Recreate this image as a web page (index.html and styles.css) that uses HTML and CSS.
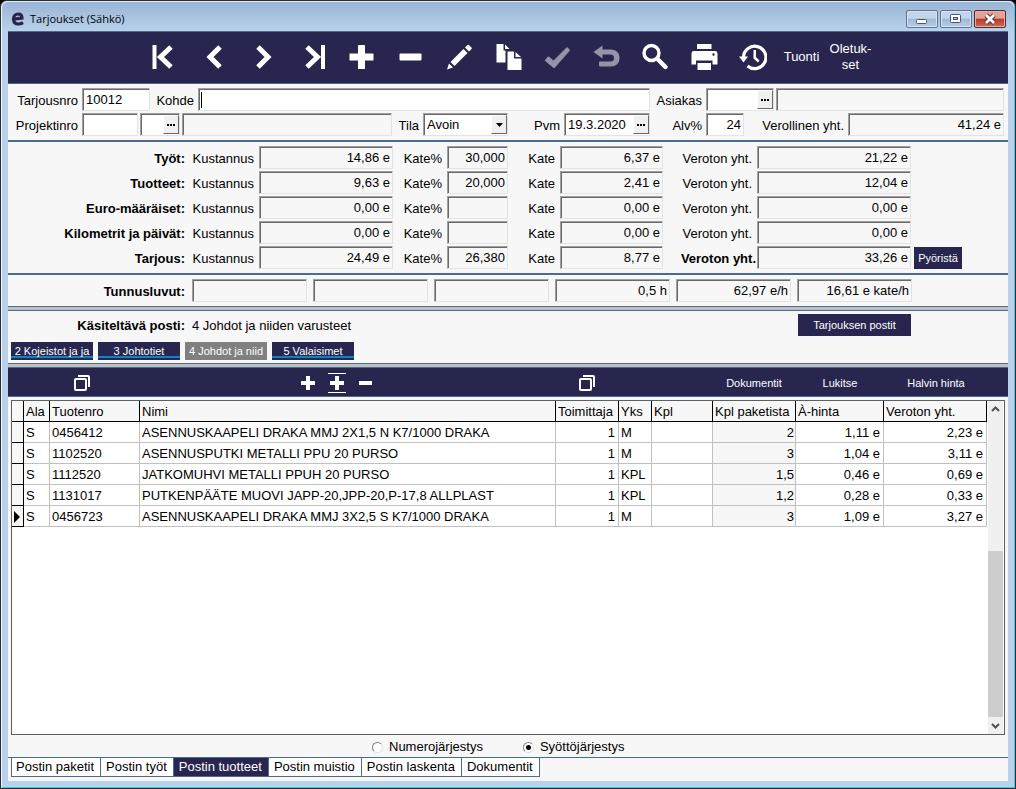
FILE: index.html
```
<!DOCTYPE html>
<html lang="fi">

<head>
    <meta charset="UTF-8">
    <meta name="viewport" content="width=device-width, initial-scale=1.0">
    <title>Tarjoukset (Sähkö)</title>
    <link rel="stylesheet" href="styles.css">
</head>

<body>
    <div class="window">
        <header class="titlebar">
            <svg class="logo" viewBox="0 0 14 16"><path d="M3 8.2L11 7C11 4.500 9.500 3 7.200 3C4.500 3 2.500 5 2.500 8C2.500 11.200 4.500 13 7.500 13C9.200 13 10.500 12.600 12 11.600" fill="none" stroke="#28264f" stroke-width="3.200"/></svg>
            <h1>Tarjoukset (Sähkö)</h1>
            <div class="window-buttons">
                <button type="button" aria-label="Pienennä"><svg viewBox="0 0 30 16"><rect x="9.500" y="8.500" width="10" height="4" rx="1" fill="#fff" stroke="#4b5668"/></svg></button>
                <button type="button" aria-label="Palauta"><svg viewBox="0 0 30 16"><rect x="9.500" y="3.500" width="10" height="8" rx="1" fill="#fff" stroke="#4b5668"/><rect x="12.500" y="6.500" width="4" height="2" fill="#a9c1dc" stroke="#4b5668"/></svg></button>
                <button type="button" class="close" aria-label="Sulje"><svg viewBox="0 0 30 16"><path d="M11 4L19 12M19 4L11 12" stroke="#5a3038" stroke-width="4.600"/><path d="M11 4L19 12M19 4L11 12" stroke="#fff" stroke-width="2.800"/></svg></button>
            </div>
        </header>

        <main class="content">
            <nav class="toolbar">
                <button type="button" aria-label="Ensimmäinen"><svg viewBox="0 0 28 28"><path d="M1.500 2H5.500V26H1.500Z"/><path class="line" d="M20 4L9.500 14L20 24"/></svg></button>
                <button type="button" aria-label="Edellinen"><svg viewBox="0 0 28 28"><path class="line" d="M20 4L10 14L20 24"/></svg></button>
                <button type="button" aria-label="Seuraava"><svg viewBox="0 0 28 28"><path class="line" d="M9 4L19 14L9 24"/></svg></button>
                <button type="button" aria-label="Viimeinen"><svg viewBox="0 0 28 28"><path d="M23 2H27V26H23Z"/><path class="line" d="M9 4L19.500 14L9 24"/></svg></button>
                <button type="button" aria-label="Lisää"><svg viewBox="0 0 28 28"><path d="M11 2.500Q11 2 11.500 2H17.500Q18 2 18 2.500V10.500H26Q26.500 10.500 26.500 11V17Q26.500 17.500 26 17.500H18V25.500Q18 26 17.500 26H11.500Q11 26 11 25.500V17.500H3Q2.500 17.500 2.500 17V11Q2.500 10.500 3 10.500H11Z"/></svg></button>
                <button type="button" aria-label="Poista"><svg viewBox="0 0 28 28"><rect x="3.500" y="10.500" width="22" height="7" rx="1"/></svg></button>
                <button type="button" aria-label="Muokkaa"><svg viewBox="0 0 28 28"><path d="M2 26.500L4 20.500L8 24.500Z"/><path d="M5.500 19L18.500 6L22.500 10L9.500 23Z"/><path d="M20 4.500L22.500 2Q23.200 1.300 24 2L26.500 4.500Q27.200 5.200 26.500 6L24 8.500Z"/></svg></button>
                <button type="button" aria-label="Kopioi"><svg viewBox="0 0 28 28"><path d="M2.500 1H9.500V7.500H11.500V19.500H2.500Z"/><path d="M11 1.500L15.500 6H11Z"/><path d="M13.500 8.500H20V15.500H27.500V27H13.500Z"/><path d="M21.500 9L27 14H21.500Z"/></svg></button>
                <button type="button" aria-label="Hyväksy" disabled><svg viewBox="0 0 28 28"><path d="M2 17L5 13.500Q5.500 13.200 6.500 14L10.500 17.500L23.500 4.500Q24.200 4 25 4.700L26.500 6.500Q27 7.200 26.500 8L12 24.500Q11 25.500 10 24.500L2.200 18Q1.700 17.500 2 17Z"/></svg></button>
                <button type="button" aria-label="Kumoa" disabled><svg viewBox="0 0 28 28"><path d="M1.500 9L10.500 2.500V6.500H18.500C24 6.500 27.500 9.500 27.500 15C27.500 20.500 24 23.500 18.500 23.500H8Q7 23.500 7 22.500V19.500Q7 18.500 8 18.500H18.500Q22 18.500 22 15Q22 11.500 18.500 11.500H10.500V15.500Z"/></svg></button>
                <button type="button" aria-label="Etsi"><svg viewBox="0 0 28 28"><circle cx="10.500" cy="10" r="7.500" fill="none" stroke="#fff" stroke-width="3.400"/><path d="M16.500 16L24.500 24" stroke="#fff" stroke-width="4.400" stroke-linecap="round"/></svg></button>
                <button type="button" aria-label="Tulosta"><svg viewBox="0 0 28 28"><path d="M7 1H21.500V6H7Z"/><path fill-rule="evenodd" d="M3.500 8H25Q27.500 8 27.500 11V21.500H22.500V17.500H6V21.500H1.500V11Q1.500 8 3.500 8ZM22.300 11.500A1.200 1.200 0 1 0 24.700 11.500A1.200 1.200 0 1 0 22.300 11.500Z"/><path d="M7.500 20H21V27H7.500Z"/></svg></button>
                <button type="button" aria-label="Historia"><svg viewBox="0 0 28 28"><path d="M4.500 14A11.200 11.200 0 1 1 8.500 23" fill="none" stroke="#fff" stroke-width="3.200"/><path d="M0 13.500H9L4.500 19.500Z"/><path d="M14.500 7H17V14L20.500 17.500L19 19.500L14.500 15.500Z"/></svg></button>
                <button type="button">Tuonti</button>
                <button type="button">Oletuk-<br>set</button>
            </nav>

            <section class="panel">
                <div class="row row-customer">
                    <label for="tarjousnro">Tarjousnro</label>
                    <input type="text" id="tarjousnro" value="10012">
                    <label for="kohde">Kohde</label>
                    <input type="text" id="kohde" class="cursor">
                    <label for="asiakas">Asiakas</label>
                    <div class="combo">
                        <input type="text" id="asiakas">
                        <button type="button" class="dots" aria-label="Valitse asiakas"><i></i></button>
                    </div>
                    <input type="text" aria-label="Asiakkaan nimi" readonly>
                </div>
                <div class="row row-project">
                    <label for="projektinro">Projektinro</label>
                    <input type="text" id="projektinro">
                    <div class="combo">
                        <input type="text" aria-label="Alaprojekti">
                        <button type="button" class="dots" aria-label="Valitse projekti"><i></i></button>
                    </div>
                    <input type="text" aria-label="Projektin nimi" readonly>
                    <label for="tila">Tila</label>
                    <div class="select-wrap">
                        <select id="tila">
                            <option>Avoin</option>
                            <option>Suljettu</option>
                        </select>
                        <span class="arrow"><svg viewBox="0 0 7 4"><path d="M0 0H7L3.500 4Z"/></svg></span>
                    </div>
                    <label for="pvm">Pvm</label>
                    <div class="combo">
                        <input type="text" id="pvm" value="19.3.2020">
                        <button type="button" class="dots" aria-label="Valitse päivä"><i></i></button>
                    </div>
                    <label for="alv">Alv%</label>
                    <input type="text" id="alv" class="num" value="24">
                    <label for="verollinen">Verollinen yht.</label>
                    <input type="text" id="verollinen" class="num" value="41,24 e" readonly>
                </div>
            </section>

            <section class="panel lined">
                <div class="row row-sum">
                    <b>Työt:</b>
                    <label for="k1">Kustannus</label><input type="text" id="k1" class="num" value="14,86 e" readonly>
                    <label for="p1">Kate%</label><input type="text" id="p1" class="num" value="30,000" readonly>
                    <label for="c1">Kate</label><input type="text" id="c1" class="num" value="6,37 e" readonly>
                    <label for="v1">Veroton yht.</label><input type="text" id="v1" class="num" value="21,22 e" readonly>
                </div>
                <div class="row row-sum">
                    <b>Tuotteet:</b>
                    <label for="k2">Kustannus</label><input type="text" id="k2" class="num" value="9,63 e" readonly>
                    <label for="p2">Kate%</label><input type="text" id="p2" class="num" value="20,000" readonly>
                    <label for="c2">Kate</label><input type="text" id="c2" class="num" value="2,41 e" readonly>
                    <label for="v2">Veroton yht.</label><input type="text" id="v2" class="num" value="12,04 e" readonly>
                </div>
                <div class="row row-sum">
                    <b>Euro-määräiset:</b>
                    <label for="k3">Kustannus</label><input type="text" id="k3" class="num" value="0,00 e" readonly>
                    <label for="p3">Kate%</label><input type="text" id="p3" class="num" readonly>
                    <label for="c3">Kate</label><input type="text" id="c3" class="num" value="0,00 e" readonly>
                    <label for="v3">Veroton yht.</label><input type="text" id="v3" class="num" value="0,00 e" readonly>
                </div>
                <div class="row row-sum">
                    <b>Kilometrit ja päivät:</b>
                    <label for="k4">Kustannus</label><input type="text" id="k4" class="num" value="0,00 e" readonly>
                    <label for="p4">Kate%</label><input type="text" id="p4" class="num" readonly>
                    <label for="c4">Kate</label><input type="text" id="c4" class="num" value="0,00 e" readonly>
                    <label for="v4">Veroton yht.</label><input type="text" id="v4" class="num" value="0,00 e" readonly>
                </div>
                <div class="row row-sum">
                    <b>Tarjous:</b>
                    <label for="k5">Kustannus</label><input type="text" id="k5" class="num" value="24,49 e" readonly>
                    <label for="p5">Kate%</label><input type="text" id="p5" class="num" value="26,380" readonly>
                    <label for="c5">Kate</label><input type="text" id="c5" class="num" value="8,77 e" readonly>
                    <label for="v5" class="total">Veroton yht.</label><input type="text" id="v5" class="num" value="33,26 e" readonly>
                    <button type="button" class="btn round-btn">Pyöristä</button>
                </div>
            </section>

            <section class="panel lined">
                <div class="row row-keys">
                    <b>Tunnusluvut:</b>
                    <input type="text" class="num" aria-label="Tunnusluku 1" readonly>
                    <input type="text" class="num" aria-label="Tunnusluku 2" readonly>
                    <input type="text" class="num" aria-label="Tunnusluku 3" readonly>
                    <input type="text" class="num" aria-label="Tunnusluku 4" value="0,5 h" readonly>
                    <input type="text" class="num" aria-label="Tunnusluku 5" value="62,97 e/h" readonly>
                    <input type="text" class="num" aria-label="Tunnusluku 6" value="16,61 e kate/h" readonly>
                </div>
            </section>

            <div class="splitter"></div>

            <section class="post">
                <div class="row-post">
                    <b>Käsiteltävä posti:</b>
                    <span>4 Johdot ja niiden varusteet</span>
                    <button type="button" class="btn">Tarjouksen postit</button>
                </div>
                <div class="post-tabs">
                    <button type="button">2 Kojeistot ja ja</button>
                    <button type="button">3 Johtotiet</button>
                    <button type="button" class="current">4 Johdot ja niid</button>
                    <button type="button">5 Valaisimet</button>
                </div>
            </section>

            <div class="splitter"></div>

            <nav class="subbar">
                <button type="button" aria-label="Kopioi rivi"><svg viewBox="0 0 20 20"><rect x="3" y="6" width="11" height="11" rx="1"/><path d="M6 3H16Q17 3 17 4V14"/></svg></button>
                <div class="subbar-group">
                    <button type="button" aria-label="Lisää rivi"><svg viewBox="0 0 20 20"><path class="thick" d="M10 3V17M3 10H17"/></svg></button>
                    <button type="button" aria-label="Lisää väliin"><svg viewBox="0 0 20 20"><path class="thick" d="M10 3V17M3 10H17"/><path class="thin" d="M1 .500H19M1 19.500H19"/></svg></button>
                    <button type="button" aria-label="Poista rivi"><svg viewBox="0 0 20 20"><path class="thick" d="M3 10H16"/></svg></button>
                </div>
                <button type="button" aria-label="Kopioi rivit"><svg viewBox="0 0 20 20"><rect x="3" y="6" width="11" height="11" rx="1"/><path d="M6 3H16Q17 3 17 4V14"/></svg></button>
                <div class="subbar-actions">
                    <button type="button">Dokumentit</button>
                    <button type="button">Lukitse</button>
                    <button type="button">Halvin hinta</button>
                </div>
            </nav>

            <div class="grid-box">
                <div class="grid-scroll">
                    <table class="grid">
                        <colgroup>
                            <col class="w-mark"><col class="w-ala"><col class="w-nro"><col><col class="w-toim">
                            <col class="w-yks"><col class="w-kpl"><col class="w-pak"><col class="w-hinta"><col class="w-yht">
                        </colgroup>
                        <thead>
                            <tr><th></th><th>Ala</th><th>Tuotenro</th><th>Nimi</th><th>Toimittaja</th><th>Yks</th><th>Kpl</th><th>Kpl paketista</th><th>À-hinta</th><th>Veroton yht.</th></tr>
                        </thead>
                        <tbody>
                            <tr><td></td><td>S</td><td>0456412</td><td>ASENNUSKAAPELI DRAKA MMJ 2X1,5 N K7/1000 DRAKA</td><td class="num">1</td><td>M</td><td></td><td class="num shade">2</td><td class="num">1,11 e</td><td class="num">2,23 e</td></tr>
                            <tr><td></td><td>S</td><td>1102520</td><td>ASENNUSPUTKI METALLI PPU 20 PURSO</td><td class="num">1</td><td>M</td><td></td><td class="num shade">3</td><td class="num">1,04 e</td><td class="num">3,11 e</td></tr>
                            <tr><td></td><td>S</td><td>1112520</td><td>JATKOMUHVI METALLI PPUH 20 PURSO</td><td class="num">1</td><td>KPL</td><td></td><td class="num shade">1,5</td><td class="num">0,46 e</td><td class="num">0,69 e</td></tr>
                            <tr><td></td><td>S</td><td>1131017</td><td>PUTKENPÄÄTE MUOVI JAPP-20,JPP-20,P-17,8 ALLPLAST</td><td class="num">1</td><td>KPL</td><td></td><td class="num shade">1,2</td><td class="num">0,28 e</td><td class="num">0,33 e</td></tr>
                            <tr><td><svg class="marker" viewBox="0 0 6 12"><path d="M0 0L6 6L0 12Z"/></svg></td><td>S</td><td>0456723</td><td>ASENNUSKAAPELI DRAKA MMJ 3X2,5 S K7/1000 DRAKA</td><td class="num">1</td><td>M</td><td></td><td class="num shade">3</td><td class="num">1,09 e</td><td class="num">3,27 e</td></tr>
                        </tbody>
                    </table>
                </div>
                <div class="scrollbar">
                    <svg viewBox="0 0 15 17"><path d="M4 10L7.500 6.500L11 10"/></svg>
                    <div class="thumb"></div>
                    <svg viewBox="0 0 15 17"><path d="M4 7L7.500 10.500L11 7"/></svg>
                </div>
            </div>

            <div class="order">
                <label><input type="radio" name="order">Numerojärjestys</label>
                <label><input type="radio" name="order" checked>Syöttöjärjestys</label>
            </div>

            <nav class="tabs">
                <button type="button">Postin paketit</button>
                <button type="button">Postin työt</button>
                <button type="button" class="active">Postin tuotteet</button>
                <button type="button">Postin muistio</button>
                <button type="button">Postin laskenta</button>
                <button type="button">Dokumentit</button>
            </nav>
        </main>
    </div>
</body>

</html>
```

FILE: styles.css
```
* {
    box-sizing: border-box;
}

body {
    margin: 0;
    background: #000;
    color: #000;
    font-family: "Liberation Sans", Arial, sans-serif;
    font-size: 13px;
    line-height: 16px;
}

button,
input,
select {
    margin: 0;
    font: inherit;
    color: inherit;
}

button {
    padding: 0;
    border: none;
    background: none;
    white-space: nowrap;
    cursor: pointer;
}

/* window frame */
.window {
    display: flex;
    flex-direction: column;
    min-height: 100vh;
    padding: 0 6px 7px;
    border: 1px solid #2b2b33;
    border-radius: 7px 7px 0 0;
    background: #b9d1ea;
    box-shadow: inset 1px 1px #f0f7ff, inset -1px -1px #35cfe8;
}

.titlebar {
    display: flex;
    align-items: center;
    height: 30px;
    margin: 0 -5px;
    padding: 5px 8px 0 9px;
    border-radius: 6px 6px 0 0;
    background: linear-gradient(#98b4d4, #b9d1ea);
    box-shadow: inset 0 1px #e3eefa;
}

.logo {
    width: 14px;
    height: 16px;
}

.titlebar h1 {
    flex: 1;
    margin: 0 0 0 5px;
    font: 11px "Open Sans", sans-serif;
}

.window-buttons {
    display: flex;
    gap: 2px;
}

.window-buttons button {
    width: 32px;
    height: 18px;
    border: 1px solid #5d7493;
    border-radius: 2px;
    background: linear-gradient(#c3d5ea 45%, #9db8d6 50%, #b7cfe8);
    box-shadow: inset 0 0 0 1px #d5e3f3;
}

.window-buttons .close {
    border-color: #5b2530;
    background: linear-gradient(#e0a497 45%, #b83a28 50%, #cf6a50);
    box-shadow: inset 0 0 0 1px #e5b0a6;
}

.window-buttons svg {
    display: block;
    width: 30px;
    height: 16px;
}

.content {
    display: flex;
    flex: 1;
    flex-direction: column;
    margin: 0 1px;
    background: #f7f7f7;
}

/* toolbar */
.toolbar {
    display: flex;
    height: 53px;
    padding: 0 0 2px 132px;
    border-top: 1px solid #4a6a90;
    border-bottom: 1px solid #4a6a90;
    background: #28264f;
    color: #fff;
}

.toolbar button {
    display: flex;
    align-items: center;
    justify-content: center;
    width: 49px;
}

.toolbar svg {
    width: 28px;
    height: 28px;
    fill: #fff;
}

.toolbar button:disabled svg {
    fill: #9493aa;
}

.toolbar .line {
    fill: none;
    stroke: #fff;
    stroke-width: 5;
}

/* form panels */
.panel {
    display: flex;
    flex-direction: column;
    gap: 2px;
    padding: 4px 4px 4px 0;
}

.panel.lined {
    border-top: 2px solid #4a6a90;
}

.row {
    display: grid;
    align-items: center;
    white-space: nowrap;
}

.row label {
    padding: 2px 2px 0 0;
    text-align: right;
}

.row b {
    padding: 2px 1px 0 0;
    text-align: right;
}

.row-customer {
    grid-template-columns: 72px 68px 44px 1fr 52px 68px 228px;
    column-gap: 2px;
}

.row-project {
    grid-template-columns: 72px 56px 40px 1fr 27px 85px 52px 86px 52px 38px 100px 156px;
    column-gap: 2px;
}

.row-sum {
    grid-template-columns: 178px 73px 134px 54px 61px 52px 103px 94px 154px 51px;
}

.row-sum label {
    padding-right: 5px;
}

.row-sum .total {
    padding-right: 1px;
    font-weight: bold;
}

.row-keys {
    grid-template-columns: 178px repeat(6, 115px);
    column-gap: 6px;
}

.row input,
.row select {
    width: 100%;
    min-width: 0;
    height: 23px;
    padding: 0 2px 0 3px;
    border: 1px solid #e3e3e3;
    border-top-color: #a0a0a0;
    border-left-color: #a0a0a0;
    border-radius: 0;
    outline: none;
    background: #fff;
    box-shadow: inset 1px 1px #696969;
}

.row input[readonly] {
    background: #f7f7f7;
}

.row .num {
    text-align: right;
}

.row .cursor {
    background: linear-gradient(#000, #000) 2px 3px / 1px 16px no-repeat #fff;
}

.combo,
.select-wrap {
    display: grid;
}

.combo input,
.select-wrap select,
.dots,
.arrow {
    grid-area: 1 / 1;
}

.row select {
    appearance: none;
}

.dots,
.arrow {
    display: flex;
    align-items: center;
    justify-content: center;
    justify-self: end;
    width: 16px;
    height: 19px;
    margin: 2px 1px;
    border: 1px solid #fff;
    border-right-color: #696969;
    border-bottom-color: #696969;
    background: #f0f0f0;
}

.arrow {
    pointer-events: none;
}

.arrow svg {
    width: 7px;
    height: 4px;
}

.dots i {
    width: 9px;
    height: 2px;
    background: repeating-linear-gradient(90deg, #000 0 2px, transparent 2px 3px);
}

.btn {
    height: 22px;
    background: #28264f;
    color: #fff;
    font-size: 11px;
}

.round-btn {
    margin-left: 3px;
}

.splitter {
    height: 5px;
    border-top: 1px solid #4a6a90;
    border-bottom: 1px solid #4a6a90;
    background: #c0c0c0;
}

/* current post */
.post {
    padding: 3px;
}

.row-post {
    display: grid;
    grid-template-columns: 174px 599px 113px;
    column-gap: 7px;
    align-items: center;
}

.row-post b,
.row-post span {
    padding-top: 2px;
}

.row-post b {
    text-align: right;
}

.post-tabs {
    display: flex;
    gap: 5px;
    margin-top: 6px;
}

.post-tabs button {
    width: 82px;
    height: 18px;
    background: linear-gradient(#28264f 14px, #0a84c8 14px 16px, #28264f 16px);
    color: #fff;
    font-size: 11px;
}

.post-tabs .current {
    background: #808080;
}

.subbar {
    display: grid;
    grid-template-columns: 148px auto 148px 1fr;
    align-items: center;
    height: 29px;
    padding-top: 1px;
    border-bottom: 1px solid #4a6a90;
    background: #28264f;
    color: #fff;
    font-size: 11px;
}

.subbar svg {
    display: block;
    width: 20px;
    height: 20px;
    margin: 0 auto;
    fill: none;
    stroke: #fff;
    stroke-width: 2;
}

.subbar .thick {
    stroke-width: 4;
}

.subbar .thin {
    stroke-width: 1;
}

.subbar-group {
    display: flex;
    gap: 9px;
    width: 357px;
    padding-left: 142px;
}

.subbar-actions {
    display: grid;
    grid-template-columns: 86px 86px 106px;
    justify-content: end;
    padding-right: 19px;
}

/* product grid */
.grid-box {
    display: flex;
    flex: 1;
    margin: 3px 3px 0;
    border: 1px solid #5f5f5f;
    background: #fff;
}

.grid-scroll {
    flex: 1;
    min-width: 0;
}

.grid {
    width: 100%;
    table-layout: fixed;
    border-collapse: separate;
    border-spacing: 0;
}

.w-mark { width: 12px; }
.w-ala { width: 26px; }
.w-nro { width: 90px; }
.w-toim { width: 63px; }
.w-yks { width: 33px; }
.w-kpl { width: 61px; }
.w-pak { width: 83px; }
.w-hinta { width: 88px; }
.w-yht { width: 103px; }

.grid th,
.grid td {
    height: 21px;
    padding: 2px 2px 0;
    border-right: 1px solid #c0c0c0;
    border-bottom: 1px solid #c0c0c0;
    font-weight: normal;
    text-align: left;
    white-space: nowrap;
    overflow: hidden;
}

.grid th,
.grid td:first-child {
    border-color: #000;
    background: #f7f7f7;
}

.grid .num {
    padding-right: 3px;
    text-align: right;
}

.grid .shade {
    padding-right: 1px;
    background: #f7f7f7;
}

.marker {
    display: block;
    width: 6px;
    height: 12px;
}

.scrollbar {
    display: flex;
    flex-direction: column;
    width: 15px;
    margin: 0 1px;
    background: #f0f0f0;
}

.scrollbar svg {
    height: 17px;
    fill: none;
    stroke: #505050;
    stroke-width: 2;
}

.thumb {
    flex: none;
    height: 50%;
    margin-top: auto;
    background: #cdcdcd;
}

/* sort order */
.order {
    display: flex;
    gap: 40px;
    height: 22px;
    padding: 2px 0 0 364px;
}

.order label {
    display: flex;
    align-items: center;
    gap: 6px;
}

.order input {
    appearance: none;
    width: 11px;
    height: 11px;
    border: 1px solid #808080;
    border-right-color: #e3e3e3;
    border-bottom-color: #e3e3e3;
    border-radius: 50%;
    background: #fff;
}

.order input:checked {
    background: radial-gradient(circle, #000 2px, #fff 3px);
}

/* bottom tabs */
.tabs {
    display: flex;
    height: 24px;
    padding: 0 3px 4px;
    border-top: 1px solid #4a6a90;
}

.tabs button {
    padding: 0 6px 0 5px;
    border: 1px solid #4a6a90;
    border-width: 0 1px 1px 0;
    background: #fff;
}

.tabs button:first-child {
    padding-left: 4px;
    border-left-width: 1px;
}

.tabs .active {
    background: #28264f;
    color: #fff;
}
```
